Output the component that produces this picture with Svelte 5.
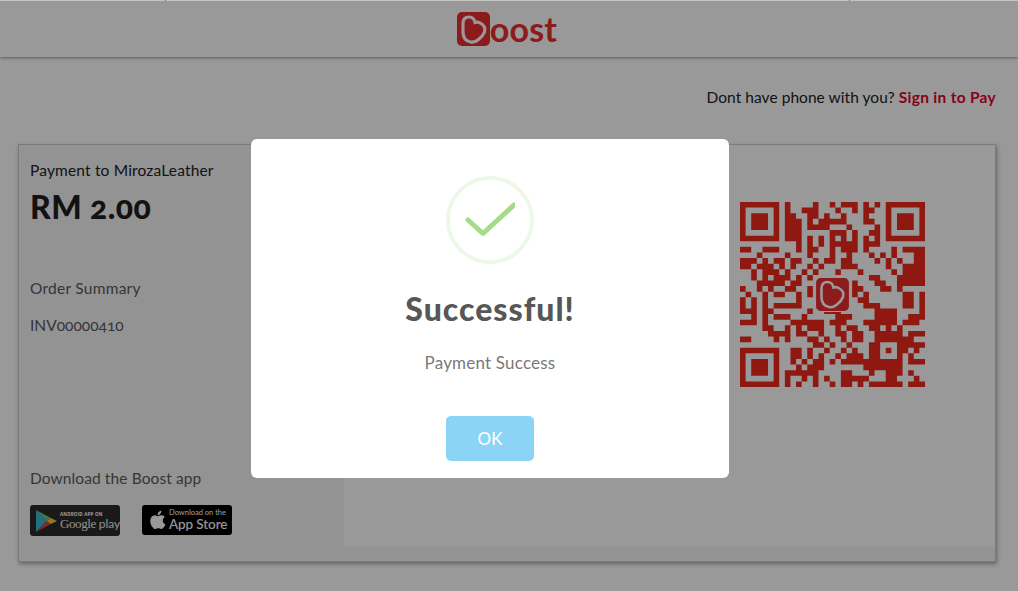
<script>
  const heart = "M6 11.5 Q6 5 12 5 Q17 5 18 10.5 Q21 9.5 24 11.5 Q29 14.5 27.5 20 Q26 24 21.5 27.5 Q17.5 31 13.5 30 Q6 28.5 6 20 Z";
  const top = [
    "#.... #..#. ###.# .#",
    "#..## #...# ..#.# #.",
    "##..# #.#.. #...# ..",
    "###.# .#### #...# #.",
    "###.# ###.. .#... .#",
    "###.. ...## #.#.. ##",
    "###.# .#.#. #.#.# .#",
    "..#.# .#.## ###.# ##"
  ];
  const mid = [
    "##..# ##... #.##. .#.## #.#.. ..#.# ###",
    "...#. ...#. ..#.. .#..# ...#. #.#.. .##",
    "###.# .##.# #..#. ##.## ....# .#.#. .##",
    "##.## #.#.# ..#.# ...## #.... .#..# ###",
    "..#.# ##.#. .#.#. ..#.. .#... ..#.# ###",
    "..#.# .###. #.#.. ..... ...## ...## ###",
    "...## ###.# #.... ..... #...# #..## ###",
    "#..#. #..## ..#.. ..... ##... ##.#. ...",
    ".#..# .##.. #.#.. ..... #.#.. ....# #.#",
    "#.#.# ..... #.... ..... .##.. ....# #.#",
    "#.#.# .#### #.... ..... ..### ....# #.#",
    "###.# #.... ..#.. ###.. ....# ###.. ..#",
    "..#.# .###. .#... ..### ....# ###.. ###",
    "###.# ....# ##### .###. ..### ###.# ##.",
    "....# #..#. #.### ..#.# #..## .#.#. ...",
    "..... ####. ##..# ..##. ##..# ####. ###",
    "##... .#.#. ..##. #..#. ##... ....# #.."
  ];
  const bottom = [
    "..... ##.#. .#... ##### #####",
    ".##.# ..#.. #.#.. #.... .#.#.",
    ".##.# .#..# .###. #.... ..#..",
    ".#.#. ##.#. ##### #.... #.###",
    "..#.# ##... ....# ##### #....",
    "##### #.... ##... #..## #.#..",
    "#..#. #.#.. ##### ...## ...#.",
    "#.#.. #..#. ##.#. ##### #.###"
  ];
  const clean = (s) => s.replace(/ /g, "");
  const m = [];
  for (let i = 0; i < 33; i++) m.push(new Array(33).fill(false));
  top.forEach((s, r) => [...clean(s)].forEach((c, i) => (m[r][8 + i] = c === "#")));
  mid.forEach((s, r) => [...clean(s)].forEach((c, i) => (m[8 + r][i] = c === "#")));
  bottom.forEach((s, r) => [...clean(s)].forEach((c, i) => (m[25 + r][8 + i] = c === "#")));
  const finder = (ox, oy) => {
    for (let y = 0; y < 7; y++)
      for (let x = 0; x < 7; x++) {
        const edge = x === 0 || y === 0 || x === 6 || y === 6;
        const core = x > 1 && x < 5 && y > 1 && y < 5;
        m[oy + y][ox + x] = edge || core;
      }
  };
  finder(0, 0);
  finder(26, 0);
  finder(0, 26);
  for (let y = 0; y < 5; y++)
    for (let x = 0; x < 5; x++) {
      m[24 + y][24 + x] = x === 0 || y === 0 || x === 4 || y === 4 || (x === 2 && y === 2);
    }
  let qr = "";
  m.forEach((row, y) => {
    let x = 0;
    while (x < 33) {
      if (row[x]) {
        let e = x;
        while (e < 33 && row[e]) e++;
        qr += `M${x} ${y}H${e}V${y + 1}H${x}Z`;
        x = e;
      } else x++;
    }
  });
</script>

<div class="page">
  <div class="topline"><i></i><i></i></div>
  <header class="head">
    <div class="brand">
      <svg class="mark" viewBox="0 0 33 34" aria-hidden="true">
        <rect width="33" height="34" rx="5" fill="#ea2e2e" />
        <path d={heart} fill="none" stroke="#fff" stroke-width="3.2" />
      </svg>
      <span class="word">oost</span>
    </div>
  </header>

  <main class="main">
    <p class="alt">Dont have phone with you? <a href="#signin">Sign in to Pay</a></p>

    <section class="card">
      <div class="side">
        <div class="pay">Payment to MirozaLeather</div>
        <div class="amount">RM 2.00</div>
        <div class="summary">Order Summary</div>
        <div class="inv">INV00000410</div>
        <div class="dl">Download the Boost app</div>
        <div class="badges">
          <div class="badge gp">
            <svg class="play" viewBox="0 0 24 25" aria-hidden="true">
              <path d="M0 0 L12 12.5 L0 25 Z" fill="#3fb6d8" />
              <path d="M0 0 L17 9 L12 12.5 Z" fill="#62c98a" />
              <path d="M0 25 L17 16 L12 12.5 Z" fill="#e0453f" />
              <path d="M17 9 L24 12.5 L17 16 L12 12.5 Z" fill="#f7c83a" />
            </svg>
            <div class="gptext">
              <span class="tiny">ANDROID APP ON</span>
              <span class="gpname">Google <b>play</b></span>
            </div>
          </div>
          <div class="badge as">
            <svg class="apple" viewBox="0 0 20 24" aria-hidden="true">
              <path fill="#fff" d="M16.4 12.7c0-2.6 2.1-3.8 2.2-3.9-1.2-1.8-3.1-2-3.7-2-1.6-.2-3.1.9-3.9.9-.8 0-2-.9-3.4-.9-1.7 0-3.3 1-4.2 2.6-1.8 3.1-.5 7.7 1.3 10.2.9 1.2 1.9 2.6 3.3 2.6 1.3-.1 1.8-.9 3.4-.9 1.6 0 2 .9 3.4.8 1.4 0 2.3-1.2 3.2-2.5 1-1.4 1.4-2.8 1.4-2.9-.1 0-2.9-1.1-3-4zM13.8 5c.7-.9 1.2-2.1 1.1-3.3-1 0-2.3.7-3 1.5-.7.8-1.2 2-1.1 3.2 1.1.1 2.3-.6 3-1.4z" />
            </svg>
            <div class="astext">
              <span class="astop">Download on the</span>
              <span class="asname">App Store</span>
            </div>
          </div>
        </div>
      </div>
      <div class="right">
        <div class="col"></div>
        <div class="col qrcol">
          <div class="qr">
            <svg class="code" viewBox="0 0 33 33" aria-hidden="true"><path d={qr} fill="#ee2a1c" /></svg>
            <svg class="qrlogo" viewBox="0 0 35 35" aria-hidden="true">
              <rect x="0.5" y="0.5" width="34" height="34" rx="5" fill="#ea2e2e" stroke="#fff" stroke-width="1.2" />
              <path d={heart} fill="none" stroke="#fff" stroke-width="2.6" transform="translate(0.5 0)" />
            </svg>
          </div>
        </div>
      </div>
    </section>
  </main>

  <div class="overlay">
    <div class="modal">
      <div class="ring">
        <svg viewBox="0 0 50 40" class="tick" aria-hidden="true">
          <path d="M3 20 L18 33.5 L49 5" fill="none" stroke="#a5dc86" stroke-width="5" stroke-linecap="round" stroke-linejoin="round" />
        </svg>
      </div>
      <h2>Successful!</h2>
      <p class="msg">Payment Success</p>
      <button class="ok">OK</button>
    </div>
  </div>
</div>

<style>
  :global(html), :global(body) { margin: 0; height: 100%; overflow: hidden; background: #fff; }
  .page {
    position: relative;
    width: 1018px;
    height: 591px;
    overflow: hidden;
    font-family: Lato, "Open Sans", sans-serif;
    color: #222;
  }
  .topline {
    position: relative;
    z-index: 20;
    height: 1px;
    background: #c4c4c4;
    display: flex;
    justify-content: space-between;
    padding: 0 168px 0 165px;
  }
  .topline i { width: 1px; height: 1px; background: #777; }
  .head {
    height: 56px;
    display: flex;
    justify-content: center;
    align-items: center;
    background: #fff;
    box-shadow: 0 1px 3px rgba(0, 0, 0, 0.4);
  }
  .brand { display: flex; align-items: flex-start; height: 36px; margin-right: 4px; }
  .mark { width: 33px; height: 34px; margin-top: 1px; display: block; }
  .word {
    font-weight: 700;
    font-size: 34px;
    line-height: 36px;
    letter-spacing: 0.2px;
    color: #ea2e2e;
  }
  .main { padding: 0 22px 0 18px; }
  .alt {
    margin: 31px 0 0;
    height: 18px;
    text-align: right;
    font-size: 15.5px;
    line-height: 18px;
    letter-spacing: 0.05px;
    color: #222;
  }
  .alt a { color: #e4002b; font-weight: 700; text-decoration: none; letter-spacing: 0.3px; }
  .card {
    margin-top: 38px;
    height: 418px;
    box-sizing: border-box;
    border: 1px solid #ccc;
    background: #f5f5f5;
    box-shadow: 1px 2px 4px rgba(0, 0, 0, 0.35);
    display: flex;
  }
  .side {
    width: 325px;
    box-sizing: border-box;
    padding: 16px 0 0 11px;
    display: flex;
    flex-direction: column;
  }
  .pay { font-size: 15.5px; line-height: 18px; color: #222; letter-spacing: 0.17px; }
  .amount {
    font-weight: 900;
    font-size: 32px;
    line-height: 38px;
    margin-top: 9px;
    color: #1f1f1f;
    letter-spacing: 0.4px;
    font-variant-numeric: oldstyle-nums;
  }
  .summary { margin-top: 53px; font-size: 15.5px; line-height: 18px; color: #5a5a5a; letter-spacing: 0.25px; }
  .inv {
    margin-top: 19px;
    font-size: 15.5px;
    line-height: 18px;
    color: #5a5a5a;
    font-variant-numeric: oldstyle-nums;
  }
  .dl { margin-top: 135px; font-size: 15.5px; line-height: 18px; color: #5a5a5a; letter-spacing: 0.1px; }
  .badges { display: flex; gap: 22px; margin-top: 18px; }
  .badge {
    width: 90px;
    height: 31px;
    border-radius: 3px;
    box-sizing: border-box;
    display: flex;
    align-items: center;
    color: #fff;
    overflow: hidden;
  }
  .gp { background: #2b2b2b; padding-left: 6px; gap: 3px; }
  .as { background: #000; height: 30px; padding-left: 6px; gap: 3px; }
  .play { width: 21px; height: 24px; flex: none; }
  .apple { width: 18px; height: 22px; flex: none; }
  .gptext, .astext { display: flex; flex-direction: column; white-space: nowrap; }
  .tiny { font-size: 4.5px; line-height: 5px; letter-spacing: 0.2px; font-family: "Open Sans", sans-serif; font-weight: 700; }
  .gpname { font-family: "Liberation Serif", serif; font-size: 13px; line-height: 13px; color: #eee; letter-spacing: -0.4px; }
  .gpname b { font-family: Lato, sans-serif; font-weight: 400; font-size: 12px; letter-spacing: 0; }
  .astop { font-size: 7.5px; line-height: 8px; }
  .asname { font-size: 13.5px; line-height: 15px; font-weight: 500; letter-spacing: -0.1px; }
  .right {
    flex: 1;
    height: 401px;
    background: #fff;
    display: flex;
  }
  .col { flex: 1; }
  .qrcol { display: flex; justify-content: center; padding-top: 57px; }
  .qr { position: relative; width: 185px; height: 185px; }
  .code { width: 185px; height: 185px; display: block; }
  .qrlogo { position: absolute; left: 75px; top: 75px; width: 35px; height: 35px; }
  .overlay {
    position: absolute;
    inset: 1px 0 0 0;
    z-index: 10;
    background: rgba(0, 0, 0, 0.4);
  }
  .modal {
    position: absolute;
    left: 251px;
    top: 138px;
    width: 478px;
    height: 339px;
    box-sizing: border-box;
    background: #fff;
    border-radius: 6px;
    padding-top: 37px;
    display: flex;
    flex-direction: column;
    align-items: center;
  }
  .ring {
    width: 88px;
    height: 88px;
    box-sizing: border-box;
    border: 4px solid rgba(165, 220, 134, 0.2);
    border-radius: 50%;
    display: flex;
    align-items: center;
    justify-content: center;
  }
  .tick { width: 50px; height: 40px; }
  h2 {
    margin: 23px 0 0;
    font-size: 32px;
    line-height: 44px;
    font-weight: 900;
    letter-spacing: 1px;
    color: #575757;
  }
  .msg { margin: 21px 0 0; font-size: 17px; line-height: 22px; letter-spacing: 0.2px; color: #797979; }
  .ok {
    margin-top: 42px;
    width: 88px;
    height: 45px;
    border: 0;
    border-radius: 5px;
    background: #8cd4f5;
    color: #fff;
    font-family: inherit;
    font-size: 17px;
  }
</style>
